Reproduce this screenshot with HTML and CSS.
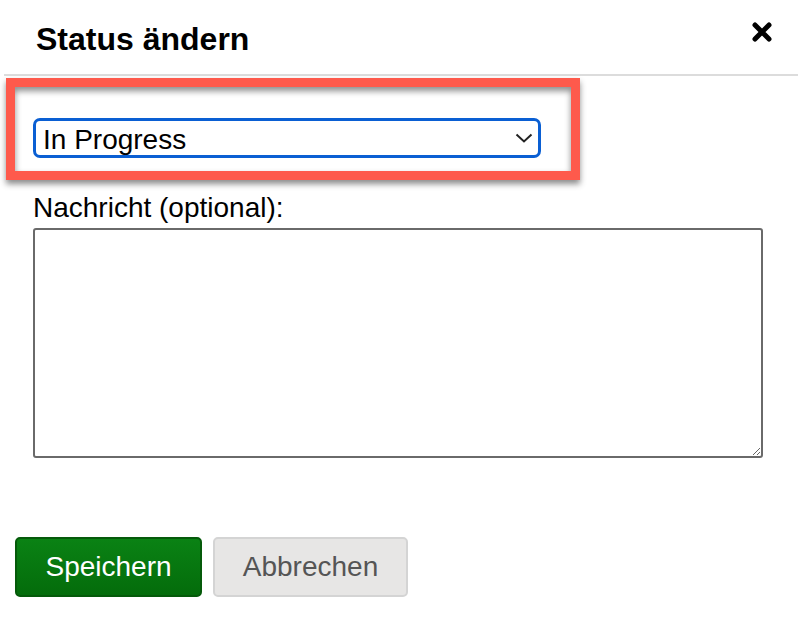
FILE: index.html
```html
<!DOCTYPE html>
<html>
<head>
    <title>Status ändern</title>
    <link rel="stylesheet" href="styles.css">
</head>
<body>
    <div class="dialog">
        <div class="dialog-header">
            <h1>Status ändern</h1>
            <button type="button" class="close" aria-label="Schließen">
                <svg width="22" height="20" viewBox="0 0 22 20">
                    <path d="M4 3 L18 17 M18 3 L4 17" stroke="#000" stroke-width="5" stroke-linecap="round"/>
                </svg>
            </button>
        </div>
        <form id="statusForm" class="dialog-body">
            <div class="highlight">
                <div class="select-wrap">
                    <select id="status" name="status">
                        <option>Open</option>
                        <option selected>In Progress</option>
                        <option>Resolved</option>
                        <option>Closed</option>
                    </select>
                    <svg class="chevron" width="18" height="10" viewBox="0 0 18 10">
                        <path d="M1.5 1.5 L9 8.5 L16.5 1.5" fill="none" stroke="#222" stroke-width="2"/>
                    </svg>
                </div>
            </div>
            <label for="message">Nachricht (optional):</label>
            <textarea id="message" name="message"></textarea>
            <div class="actions">
                <button type="button" class="btn btn-save">Speichern</button>
                <button type="button" class="btn btn-cancel">Abbrechen</button>
            </div>
        </form>
    </div>
</body>
</html>
```

FILE: styles.css
```css
body {
    margin: 0;
    font-family: "Liberation Sans", Arial, sans-serif;
    background: #fff;
    color: #000;
}
.dialog {
    width: 798px;
}
.dialog-header {
    display: flex;
    align-items: center;
    justify-content: space-between;
    height: 76px;
    margin-left: 4px;
    padding: 4px 25px 0 32px;
    border-bottom: 2px solid #dcdcdc;
    box-sizing: border-box;
}
.dialog-header h1 {
    margin: 0;
    font-size: 32px;
    font-weight: bold;
}
.close {
    display: flex;
    padding: 0;
    border: none;
    background: none;
    cursor: pointer;
    margin-top: -14px;
}
.dialog-body {
    display: flex;
    flex-direction: column;
}
.highlight {
    width: 574px;
    height: 102px;
    margin: 2px 0 0 6px;
    padding: 31px 30px 0 18px;
    border: 9px solid #fe5a4c;
    box-sizing: border-box;
    box-shadow: 0 4px 6px rgba(0, 0, 0, 0.45), inset 0 4px 6px rgba(0, 0, 0, 0.45);
}
.select-wrap {
    position: relative;
}
select {
    width: 508px;
    height: 40px;
    padding: 3px 0 0 7px;
    font-family: inherit;
    font-size: 28px;
    color: #000;
    background: #fff;
    border: 3px solid #0a5fd3;
    border-radius: 7px;
    box-sizing: border-box;
    appearance: none;
    outline: none;
}
.chevron {
    position: absolute;
    right: 8px;
    top: 15px;
    pointer-events: none;
}
label {
    display: block;
    margin: 10px 0 0 33px;
    font-size: 28px;
    line-height: 36px;
}
textarea {
    width: 730px;
    height: 230px;
    margin: 2px 0 0 33px;
    border: 2px solid #6a6a6a;
    border-radius: 3px;
    box-sizing: border-box;
    font-family: inherit;
    font-size: 28px;
}
.actions {
    display: flex;
    gap: 11px;
    margin: 79px 0 0 15px;
}
.btn {
    height: 60px;
    font-family: inherit;
    font-size: 28px;
    border-radius: 5px;
    cursor: pointer;
    box-sizing: border-box;
}
.btn-save {
    width: 187px;
    color: #fff;
    background: linear-gradient(#0a8214, #046c0b);
    border: 2px solid #055a0a;
}
.btn-cancel {
    width: 195px;
    color: #555;
    background: #e7e6e5;
    border: 2px solid #d4d4d4;
}
```
